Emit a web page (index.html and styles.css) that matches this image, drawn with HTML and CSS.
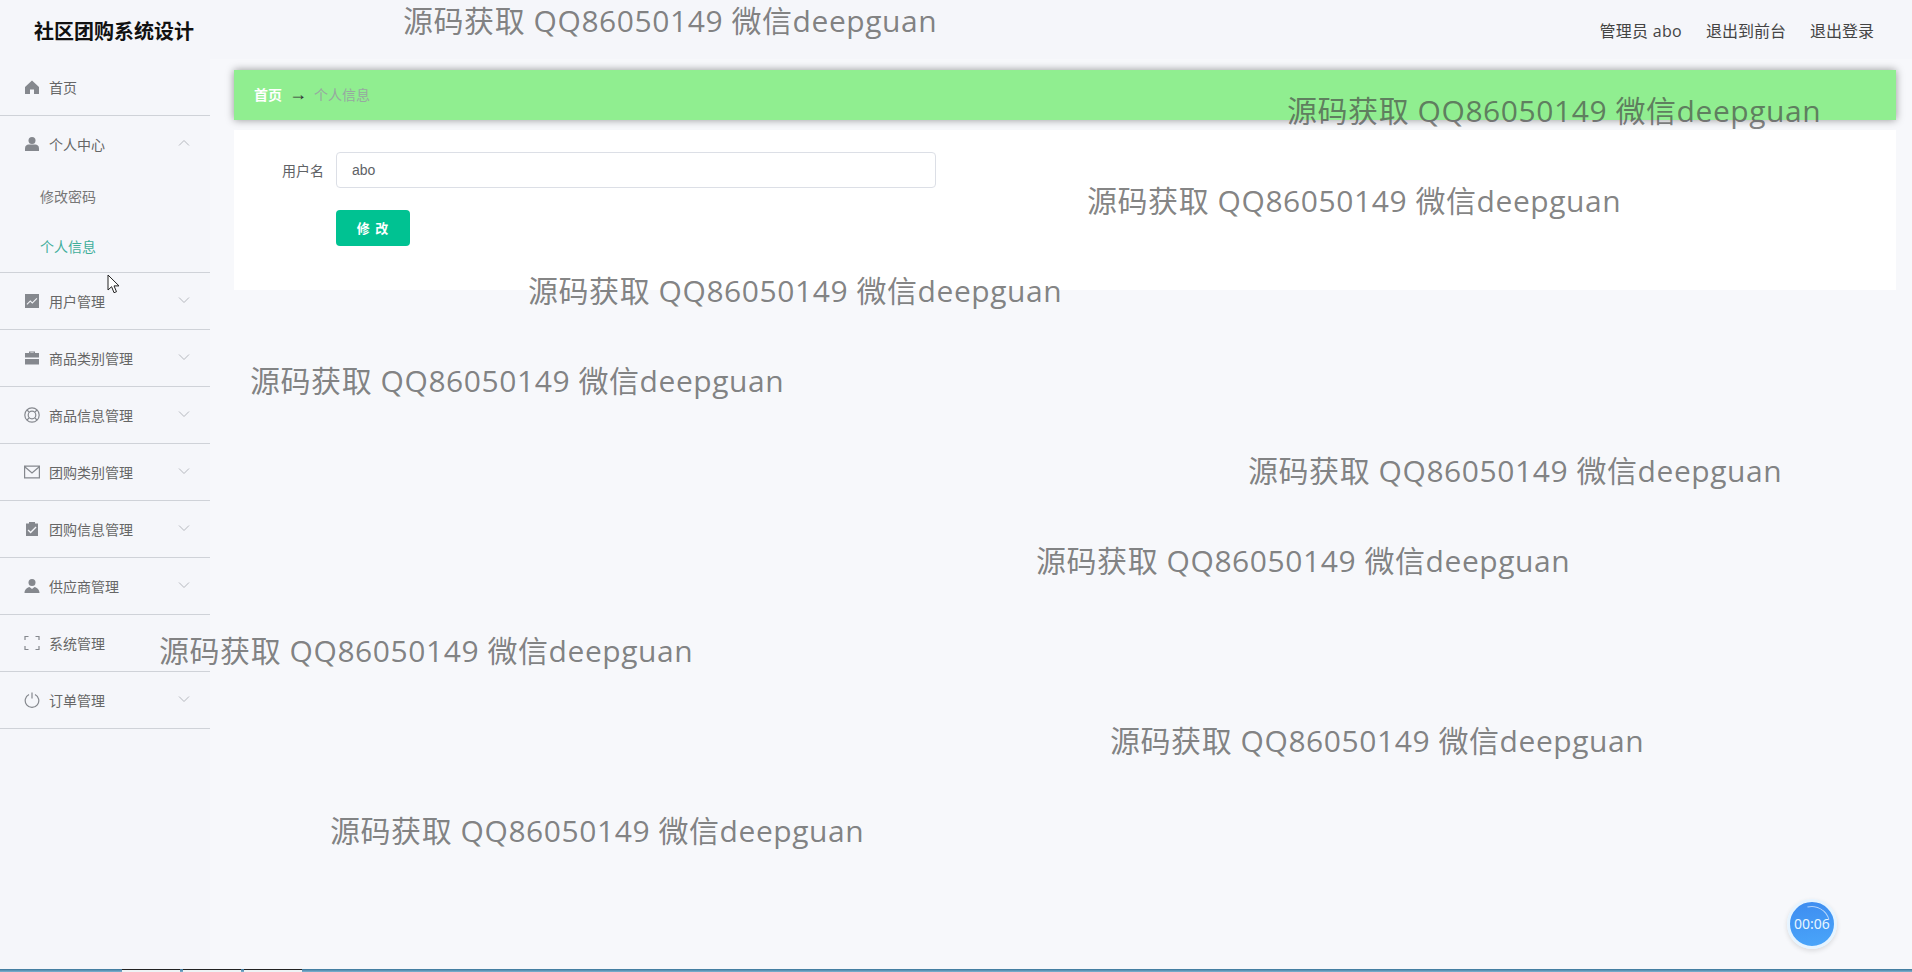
FILE: index.html
```html
<!DOCTYPE html>
<html lang="zh">
<head>
<meta charset="utf-8">
<title>社区团购系统设计</title>
<link rel="stylesheet" href="styles.css">
</head>
<body>
<div class="page">
  <header class="topbar">
    <div class="brand">社区团购系统设计</div>
    <nav class="toplinks"><span class="who">管理员 abo</span><span>退出到前台</span><span>退出登录</span></nav>
  </header>
  <div class="body">
    <aside class="sidebar">
      <div class="item"><svg class="ico" viewBox="0 0 16 16"><path d="M8 1.500 1 8v7h5v-4.500h4V15h5V8z"/></svg><span>首页</span></div>
      <div class="group">
        <div class="item bare"><svg class="ico" viewBox="0 0 16 16"><circle cx="8" cy="4.500" r="3.500"/><path d="M1 12.500c0-3 2-4 3.500-4h7c1.500 0 3.500 1 3.500 4V15H1z"/></svg><span>个人中心</span><svg class="chev" viewBox="0 0 12 8"><path d="M1 6.500 6 1.500l5 5"/></svg></div>
        <div class="sub">修改密码</div>
        <div class="sub active">个人信息</div>
      </div>
      <div class="item"><svg class="ico" viewBox="0 0 16 16"><path fill-rule="evenodd" d="M1 1h14v14H1zM2.500 11l.8.800 3-3 2 2 5-5-.8-.8-4.200 4.200-2-2z"/></svg><span>用户管理</span><svg class="chev" viewBox="0 0 12 8"><path d="M1 1.500 6 6.500l5-5"/></svg></div>
      <div class="item"><svg class="ico" viewBox="0 0 16 16"><path fill-rule="evenodd" d="M5 3V1.500h6V3h4v4.500H1V3zM6.300 3h3.400v-.4H6.300zM1 9h14v5.500H1z"/></svg><span>商品类别管理</span><svg class="chev" viewBox="0 0 12 8"><path d="M1 1.500 6 6.500l5-5"/></svg></div>
      <div class="item"><svg class="ico line" viewBox="0 0 16 16"><circle cx="8" cy="8" r="7.200"/><circle cx="8" cy="8" r="3.800"/><path d="M3 3l2.400 2.400M13 3l-2.400 2.400M3 13l2.400-2.400M13 13l-2.400-2.400"/></svg><span>商品信息管理</span><svg class="chev" viewBox="0 0 12 8"><path d="M1 1.500 6 6.500l5-5"/></svg></div>
      <div class="item"><svg class="ico line" viewBox="0 0 16 16"><path d="M.6 2.200h14.800v11.600H.6zM1 3l7 6 7-6"/></svg><span>团购类别管理</span><svg class="chev" viewBox="0 0 12 8"><path d="M1 1.500 6 6.500l5-5"/></svg></div>
      <div class="item"><svg class="ico" viewBox="0 0 16 16"><path fill-rule="evenodd" d="M2 2.500h3V1h6v1.500h3V15H2zM4.500 8.500l-.9.900 3 3L12.500 6.500l-.9-.9-5 5z"/></svg><span>团购信息管理</span><svg class="chev" viewBox="0 0 12 8"><path d="M1 1.500 6 6.500l5-5"/></svg></div>
      <div class="item"><svg class="ico" viewBox="0 0 16 16"><circle cx="8" cy="4.500" r="3.500"/><path d="M.5 15c0-3.500 2.500-5.500 5-6l2.500 2 2.500-2c2.500.5 5 2.500 5 6z"/></svg><span>供应商管理</span><svg class="chev" viewBox="0 0 12 8"><path d="M1 1.500 6 6.500l5-5"/></svg></div>
      <div class="item"><svg class="ico line" viewBox="0 0 16 16"><path d="M1 5V1.500h3.500M11.500 1.500H15V5M15 11v3.500h-3.500M4.500 14.500H1V11"/></svg><span>系统管理</span></div>
      <div class="item"><svg class="ico line" viewBox="0 0 16 16"><path d="M5 2.500a6.800 6.800 0 1 0 6 0M8 .5v6"/></svg><span>订单管理</span><svg class="chev" viewBox="0 0 12 8"><path d="M1 1.500 6 6.500l5-5"/></svg></div>
    </aside>
    <main class="main">
      <div class="crumbs"><span class="crumb-home">首页</span><span class="crumb-arrow">→</span><span class="crumb-cur">个人信息</span></div>
      <section class="panel">
        <div class="field"><label class="label">用户名</label><div class="input">abo</div></div>
        <button class="save" type="button">修 改</button>
      </section>
    </main>
  </div>
  <div class="strip"><i class="seg"></i><i class="seg"></i><i class="seg"></i></div>
</div>
<div class="marks">
  <span class="mark m1">源码获取 QQ86050149 微信deepguan</span>
  <span class="mark m2">源码获取 QQ86050149 微信deepguan</span>
  <span class="mark m3">源码获取 QQ86050149 微信deepguan</span>
  <span class="mark m4">源码获取 QQ86050149 微信deepguan</span>
  <span class="mark m5">源码获取 QQ86050149 微信deepguan</span>
  <span class="mark m6">源码获取 QQ86050149 微信deepguan</span>
  <span class="mark m7">源码获取 QQ86050149 微信deepguan</span>
  <span class="mark m8">源码获取 QQ86050149 微信deepguan</span>
  <span class="mark m9">源码获取 QQ86050149 微信deepguan</span>
  <span class="mark m10">源码获取 QQ86050149 微信deepguan</span>
</div>
<svg class="cursor" viewBox="0 0 14 20"><path d="M1 1v15l3.600-3.300 2.400 6 2.500-1-2.500-5.800H12z"/></svg>
<div class="timer">00:06</div>
</body>
</html>
```
FILE: styles.css
```css
* { box-sizing: border-box; }
html, body { margin: 0; height: 100%; overflow: hidden; }
body {
  background: #f7f8fb;
  color: #606266;
  font-family: "Liberation Sans", "Noto Sans CJK SC", sans-serif;
  font-size: 14px;
}
.page { height: 972px; display: flex; flex-direction: column; }
.topbar {
  height: 59px;
  flex: none;
  display: flex;
  align-items: center;
  justify-content: space-between;
  padding: 0 38px 0 34px;
  background: #f5f6fa;
}
.brand { font-size: 20px; font-weight: 700; color: #111; line-height: 28px; margin-top: 4px; }
.toplinks { display: flex; gap: 24px; font-size: 16px; color: #444; font-family: "Open Sans", "Noto Sans CJK SC", sans-serif; }
.who { letter-spacing: .3px; }
.body { flex: 1; display: flex; min-height: 0; }
.sidebar { width: 210px; flex: none; background: #f5f6fa; }
.item {
  height: 57px;
  display: flex;
  align-items: center;
  padding: 0 20px 0 24px;
  border-bottom: 1px solid #cfd2d8;
  color: #666;
}
.item.bare { border-bottom: 0; height: 56px; }
.group { border-bottom: 1px solid #cfd2d8; }
.ico { width: 16px; height: 16px; margin-right: 9px; fill: #85888e; flex: none; }
.ico.line { fill: none; stroke: #85888e; stroke-width: 1.200; }
.chev {
  width: 12px;
  height: 8px;
  margin-left: auto;
  margin-top: -2px;
  fill: none;
  stroke: #b5b8be;
  stroke-width: 1;
}
.sub { height: 50px; line-height: 50px; padding-left: 40px; color: #777; }
.sub.active { color: #3fae9a; }
.main { flex: 1; min-width: 0; padding: 11px 16px 0 24px; }
.crumbs {
  height: 50px;
  display: flex;
  align-items: center;
  padding: 0 20px 2px;
  background: #90ee90;
  box-shadow: 0 0 8px rgba(0, 0, 0, .4);
}
.crumb-home { color: #fff; font-weight: 700; }
.crumb-arrow { color: #303133; margin: 0 7px; font-size: 18px; }
.crumb-cur { color: #97a8a0; }
.panel {
  height: 160px;
  margin-top: 10px;
  padding: 22px 0 0;
  background: #fff;
}
.field { display: flex; align-items: center; height: 36px; }
.label { width: 90px; text-align: right; color: #606266; }
.input {
  width: 600px;
  height: 36px;
  line-height: 34px;
  margin-left: 12px;
  padding: 0 15px;
  border: 1px solid #dcdfe6;
  border-radius: 4px;
  background: #fff;
}
.save {
  display: block;
  width: 74px;
  height: 36px;
  margin: 22px 0 0 102px;
  padding: 0 0 2px;
  border: 0;
  border-radius: 4px;
  background: #00c292;
  color: #fff;
  font: 700 13px "Liberation Sans", "Noto Sans CJK SC", sans-serif;
  letter-spacing: 1px;
}
.strip {
  height: 3px;
  flex: none;
  display: flex;
  padding-left: 122px;
  gap: 3px;
  background: linear-gradient(#3a7498, #7fb4d2);
}
.seg { width: 58px; background: #eef3f5; border-top: 1px solid #222; }
.marks { position: absolute; inset: 0; pointer-events: none; }
.mark {
  position: absolute;
  font-family: "Open Sans", "Noto Sans CJK SC", sans-serif;
  font-size: 30px;
  line-height: 40px;
  letter-spacing: .56px;
  white-space: nowrap;
  color: rgba(70, 70, 70, .68);
}
.m1 { left: 403px; top: 1px; }
.m2 { left: 1287px; top: 91px; }
.m3 { left: 1087px; top: 181px; }
.m4 { left: 528px; top: 271px; }
.m5 { left: 250px; top: 361px; }
.m6 { left: 1248px; top: 451px; }
.m7 { left: 1036px; top: 541px; }
.m8 { left: 159px; top: 631px; }
.m9 { left: 1110px; top: 721px; }
.m10 { left: 330px; top: 811px; }
.cursor { position: absolute; left: 107px; top: 274px; width: 14px; height: 20px; fill: #fff; stroke: #222; stroke-width: 1; }
.timer {
  position: absolute;
  left: 1787px;
  top: 899px;
  width: 50px;
  height: 50px;
  line-height: 44px;
  text-align: center;
  border: 3px solid #e6f4ff;
  border-radius: 50%;
  background: linear-gradient(170deg, #3d8cf0, #4aa6fa);
  box-shadow: 0 2px 5px rgba(0, 0, 0, .12);
  color: #e8f6ff;
  font-family: "Noto Sans", sans-serif;
  font-size: 14px;
}
.timer::before {
  content: "";
  position: absolute;
  inset: 4px;
  border-radius: 50%;
  border: 1px solid transparent;
  border-top-color: rgba(255, 255, 255, .6);
  transform: rotate(30deg);
}
```
